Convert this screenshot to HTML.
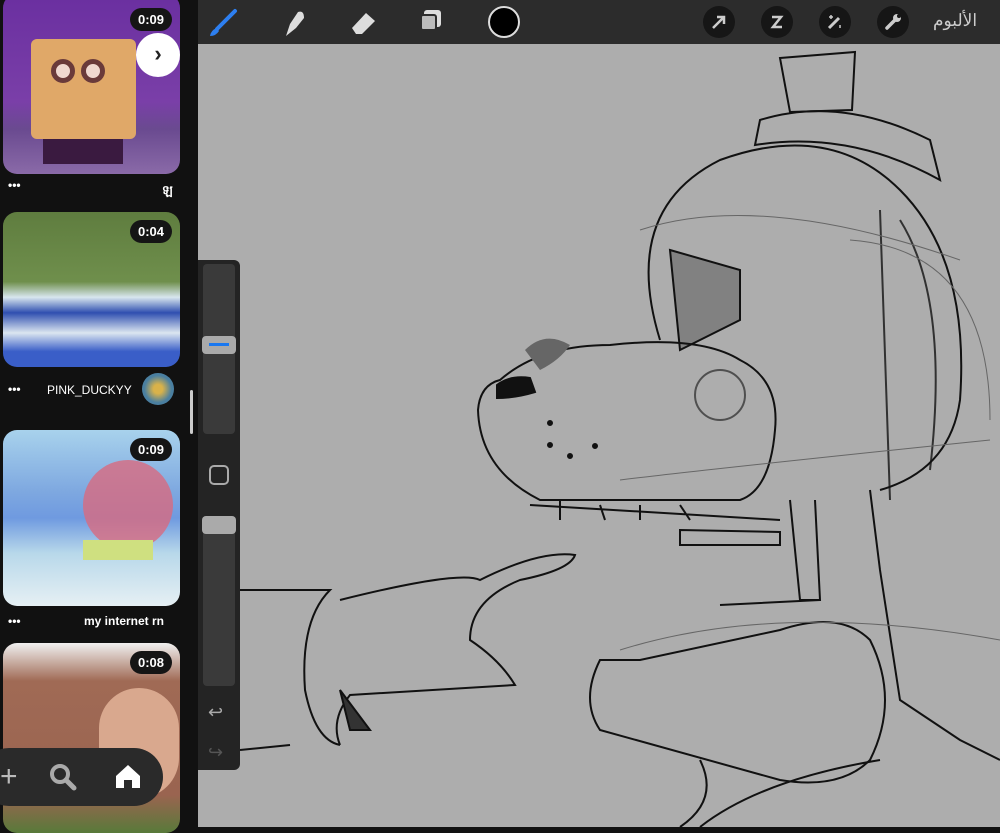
<!DOCTYPE html>
<html><head><meta charset="utf-8"><style>
*{margin:0;padding:0;box-sizing:border-box}
body{width:1000px;height:827px;overflow:hidden;background:#111;font-family:"Liberation Sans","Noto Sans CJK SC",sans-serif;position:relative}
.left{position:absolute;left:0;top:0;width:190px;height:827px;background:#111}
.th{position:absolute;left:3px;width:177px;border-radius:14px;overflow:hidden}
.dur{position:absolute;right:8px;top:8px;background:#151515;color:#fff;font-weight:bold;font-size:13px;border-radius:12px;padding:4px 8px}
.cap{position:absolute;color:#fff;font-size:12px;font-weight:bold}
.dots{position:absolute;left:8px;color:#fff;font-size:12px;font-weight:bold}
.top{position:absolute;left:198px;top:0;width:802px;height:44px;background:#2c2c2c}
.canvas{position:absolute;left:198px;top:44px;width:802px;height:783px;background:#adadad}
.circ{position:absolute;top:6px;width:32px;height:32px;border-radius:50%;background:#161616}
</style></head><body>
<div class="left">
 <div class="th" style="top:-6px;height:180px;background:linear-gradient(180deg,#6a2fa0 0,#7a3fa8 60%,#6a4a90 75%,#8a6aa8 100%)">
  <div style="position:absolute;left:28px;top:45px;width:105px;height:100px;background:#e0a868;border-radius:6px"></div>
  <div style="position:absolute;left:48px;top:65px;width:24px;height:24px;border-radius:50%;background:#f0d8d0;border:5px solid #6a3a3a"></div>
  <div style="position:absolute;left:78px;top:65px;width:24px;height:24px;border-radius:50%;background:#f0d8d0;border:5px solid #6a3a3a"></div>
  <div style="position:absolute;left:40px;top:145px;width:80px;height:25px;background:#3a1a40"></div>
  <div class="dur" style="top:14px">0:09</div>
 </div>
 <div style="position:absolute;left:136px;top:33px;width:44px;height:44px;border-radius:50%;background:#fff;color:#222;font-size:22px;font-weight:bold;text-align:center;line-height:42px">›</div>
 <div class="dots" style="top:178px">•••</div><div class="cap" style="left:162px;top:182px">ឡ</div>
 <div class="th" style="top:212px;height:155px;background:linear-gradient(180deg,#5f7d3f 0,#6f8f4c 45%,#d8e6ee 55%,#2f4fb0 65%,#dbe6f0 78%,#3a5ec8 90%)">
  <div class="dur">0:04</div>
 </div>
 <div class="dots" style="top:382px">•••</div><div class="cap" style="left:47px;top:383px;font-weight:normal">PINK_DUCKYY</div>
 <div style="position:absolute;left:142px;top:373px;width:32px;height:32px;border-radius:50%;background:radial-gradient(#d9b24a 20%,#4a7fa0 60%)"></div>
 <div class="th" style="top:430px;height:176px;background:linear-gradient(180deg,#a8d2ec 0,#7ea8e0 35%,#6f9ae0 50%,#b8d8ea 70%,#e6f0f4 100%)">
  <div style="position:absolute;left:80px;top:30px;width:90px;height:90px;border-radius:50%;background:#d86a80;opacity:.8"></div>
  <div style="position:absolute;left:80px;top:110px;width:70px;height:20px;background:#cfe080"></div>
  <div class="dur">0:09</div>
 </div>
 <div class="dots" style="top:614px">•••</div><div class="cap" style="left:84px;top:614px">my internet rn</div>
 <div class="th" style="top:643px;height:190px;background:linear-gradient(180deg,#f0f0f0 0,#a06a55 20%,#9a6450 80%,#587a3a 100%)">
  <div style="position:absolute;left:96px;top:45px;width:80px;height:110px;border-radius:40px;background:#d9a88e"></div>
  <div class="dur">0:08</div>
 </div>
 <div style="position:absolute;left:-20px;top:748px;width:183px;height:58px;border-radius:29px;background:#2a2a2a"></div>
 <div style="position:absolute;left:0;top:760px;color:#bbb;font-size:30px">+</div>
 <svg style="position:absolute;left:48px;top:762px" width="30" height="30"><circle cx="12" cy="12" r="8" stroke="#aaa" stroke-width="4" fill="none"/><line x1="18" y1="18" x2="26" y2="26" stroke="#aaa" stroke-width="5" stroke-linecap="round"/></svg>
 <svg style="position:absolute;left:114px;top:762px" width="28" height="28"><path d="M2 14 L14 3 L26 14 V26 H18 V18 H10 V26 H2Z" fill="#fff"/></svg>
</div>
<div style="position:absolute;left:190px;top:390px;width:3px;height:44px;background:#ccc;border-radius:2px"></div>
<div class="top">
 <svg style="position:absolute;left:10px;top:8px" width="30" height="30"><path d="M27 3 L9 21" stroke="#2d7ff0" stroke-width="4" stroke-linecap="round"/><path d="M9 20 Q3 22 2 28 Q8 28 11 23Z" fill="#2d7ff0"/></svg>
 <svg style="position:absolute;left:80px;top:6px" width="30" height="32"><path d="M8 30 L12 18 L20 6 Q26 4 26 12 L18 22Z" fill="#ddd"/></svg>
 <svg style="position:absolute;left:150px;top:8px" width="30" height="28"><path d="M4 20 L18 5 L27 13 L14 26 H8Z" fill="#ddd"/></svg>
 <div style="position:absolute;left:226px;top:10px;width:17px;height:17px;background:#ddd;border-radius:3px"></div>
 <div style="position:absolute;left:222px;top:14px;width:17px;height:17px;background:#bbb;border-radius:3px;border:2px solid #2c2c2c"></div>
 <div style="position:absolute;left:290px;top:6px;width:32px;height:32px;border-radius:50%;background:#000;border:2px solid #ddd"></div>
 <div class="circ" style="left:505px"><svg width="32" height="32"><path d="M10 22 L20 12 M14 11 L21 11 L21 18" stroke="#ccc" stroke-width="2.5" fill="none"/></svg></div>
 <div class="circ" style="left:563px"><svg width="32" height="32"><path d="M11 11 H20 L12 21 H21" stroke="#ccc" stroke-width="2.5" fill="none"/></svg></div>
 <div class="circ" style="left:621px"><svg width="32" height="32"><path d="M10 22 L20 12" stroke="#ccc" stroke-width="3"/><path d="M12 9 V13 M10 11 H14 M21 19 V22" stroke="#ccc" stroke-width="1.5"/></svg></div>
 <div class="circ" style="left:679px"><svg width="32" height="32"><path d="M10 22 L18 14" stroke="#ccc" stroke-width="3.5" stroke-linecap="round"/><circle cx="20" cy="12" r="4" fill="#ccc"/><circle cx="22" cy="10" r="2" fill="#161616"/></svg></div>
 <div style="position:absolute;left:735px;top:11px;color:#ccc;font-size:17px">الألبوم</div>
</div>
<div class="canvas">
<svg width="802" height="783" viewBox="198 44 802 783" style="position:absolute;left:0;top:0" fill="none" stroke="#111" stroke-width="2">
 <path d="M780 58 L855 52 L852 110 L790 112Z"/><path d="M760 120 Q840 95 930 140 L940 180 Q850 130 755 145Z"/>
 <path d="M660 340 Q620 210 720 160 Q830 120 900 190 Q970 260 960 400 Q950 470 880 490"/>
 <path d="M670 250 L740 270 L740 320 L680 350Z" fill="#555" fill-opacity=".5"/>
 <path d="M500 380 Q540 345 610 345 Q700 335 740 360 Q780 380 775 430 Q770 490 740 500 L540 500 Q480 470 478 410 Q480 385 500 380Z"/>
 <path d="M497 385 Q510 375 530 378 L535 392 Q515 398 497 398Z" fill="#111"/>
 <path d="M525 350 Q545 330 570 345 Q560 360 540 370Z" fill="#666" stroke="none"/>
 <path d="M530 505 L780 520 M560 500 L560 520 M600 505 L605 520 M640 505 L640 520 M680 505 L690 520"/>
 <path d="M680 530 L780 532 L780 545 L680 545Z M720 605 L820 600"/>
 <path d="M600 660 Q580 700 600 730 L780 780 Q840 790 870 760 Q900 700 870 640 Q840 610 780 630 L640 660Z"/>
 <path d="M240 590 L330 590 Q300 620 305 690 Q315 740 340 745 M340 600 Q460 570 480 580 Q540 550 575 555 Q570 570 520 580 Q470 600 470 640 Q500 660 515 685 L350 695 Q330 720 340 745"/>
 <path d="M340 690 L370 730 L350 730Z" fill="#333"/>
 <path d="M240 750 L290 745"/>
 <path d="M790 500 L800 600 L820 600 L815 500 M870 490 L880 570 L900 700 L960 740 L1000 760"/>
 <path d="M880 210 L890 500 M900 220 Q950 300 930 470" stroke-opacity=".8"/>
 <path d="M700 760 Q720 800 680 827 M700 827 Q760 780 880 760"/>
 <circle cx="720" cy="395" r="25" stroke-opacity=".6"/>
 <circle cx="550" cy="423" r="2" fill="#111"/><circle cx="570" cy="456" r="2" fill="#111"/><circle cx="550" cy="445" r="2" fill="#111"/><circle cx="595" cy="446" r="2" fill="#111"/>
 <g stroke="#666" stroke-width="1"><path d="M640 230 Q760 190 960 260 M620 480 Q700 470 990 440 M620 650 Q780 600 1000 640 M850 240 Q990 250 990 420"/></g>
</svg>
 <div style="position:absolute;left:0;top:216px;width:42px;height:510px;background:#242424;border-radius:0 6px 6px 0">
  <div style="position:absolute;left:5px;top:4px;width:32px;height:170px;background:#3a3a3a;border-radius:4px"></div>
  <div style="position:absolute;left:4px;top:76px;width:34px;height:18px;background:#aaa;border-radius:4px"><div style="position:absolute;left:7px;top:7px;width:20px;height:3px;background:#1a78f0"></div></div>
  <div style="position:absolute;left:11px;top:205px;width:20px;height:20px;border:2px solid #aaa;border-radius:5px"></div>
  <div style="position:absolute;left:5px;top:256px;width:32px;height:170px;background:#3a3a3a;border-radius:4px"></div>
  <div style="position:absolute;left:4px;top:256px;width:34px;height:18px;background:#aaa;border-radius:4px"></div>
  <div style="position:absolute;left:10px;top:442px;color:#aaa;font-size:18px">↩</div>
  <div style="position:absolute;left:10px;top:482px;color:#555;font-size:18px">↪</div>
 </div>
</div>
</body></html>
